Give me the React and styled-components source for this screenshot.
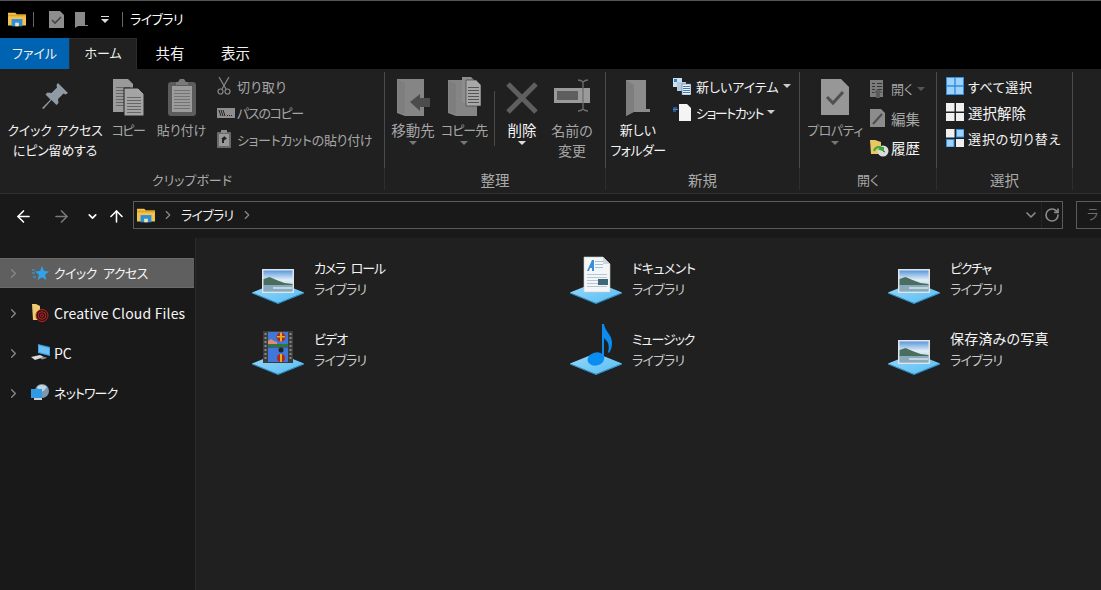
import React from 'react';
import styled, { createGlobalStyle } from 'styled-components';
import { ChevronRight, ChevronDown, ArrowLeft, ArrowRight, ArrowUp, RotateCw } from 'lucide-react';

const GlobalStyle = createGlobalStyle`
  html, body {
    margin: 0;
    height: 100%;
    overflow: hidden;
    background: #202020;
  }
  body {
    font-family: "Noto Sans CJK JP", "Noto Sans", sans-serif;
    font-size: 13px;
    font-feature-settings: "palt";
    color: #fff;
  }
  svg { display: block; flex: none; }
`;

const Window = styled.div`
  height: 590px;
  display: flex;
  flex-direction: column;
  overflow: hidden;
`;

const TitleBar = styled.div`
  height: 38px;
  box-sizing: border-box;
  background: #000;
  border-top: 1px solid #555;
  display: flex;
  align-items: center;
  padding: 0 0 1px 8px;
`;

const TitleSep = styled.div`
  width: 1px;
  height: 15px;
  background: #666;
  margin: 0 ${p => p.$r}px 0 ${p => p.$l}px;
`;

const TitleIcon = styled.div`
  margin-right: ${p => p.$r}px;
`;

const TitleText = styled.span`
  font-size: 13px;
  line-height: 18px;
  letter-spacing: -0.6px;
`;

const Tabs = styled.div`
  height: 31px;
  background: #000;
  display: flex;
`;

const Tab = styled.div`
  width: ${p => p.$w}px;
  text-align: center;
  line-height: 29px;
  font-size: ${p => p.$fs || 13}px;
  color: #f0f0f0;
  background: ${p => (p.$file ? '#0063b1' : p.$active ? '#202020' : 'transparent')};
  box-shadow: ${p => (p.$active ? 'inset 1px 1px 0 #2c2c2c, inset -1px 0 0 #2c2c2c' : 'none')};
`;

const Ribbon = styled.div`
  height: 125px;
  box-sizing: border-box;
  padding-top: 3px;
  background: #202020;
  border-bottom: 1px solid #303030;
  display: flex;
`;

const Group = styled.div`
  width: ${p => p.$w}px;
  flex: none;
  display: flex;
  flex-direction: column;
`;

const GroupBody = styled.div`
  height: 96px;
  display: flex;
  box-sizing: border-box;
  padding-left: ${p => p.$pl || 0}px;
  border-right: 1px solid #4a4a4a;
`;

const GroupLabel = styled.div`
  height: 22px;
  padding-top: 1px;
  box-sizing: border-box;
  line-height: 22px;
  text-align: center;
  font-size: ${p => p.$fs || 13}px;
  color: #aaa;
  border-right: 1px solid #2e2e2e;
`;

const LargeButton = styled.div`
  width: ${p => p.$w}px;
  flex: none;
  display: flex;
  flex-direction: column;
  align-items: center;
  padding-top: 3px;
  color: ${p => (p.$muted ? '#a6a6a6' : '#f4f4f4')};
  line-height: 20px;
  text-align: center;
  white-space: nowrap;
`;

const LargeIcon = styled.div`
  height: 46px;
  box-sizing: border-box;
  padding-top: ${p => p.$pt}px;
  display: flex;
  align-items: flex-start;
  justify-content: center;
`;

const Label = styled.span`
  margin: ${p => (p.$flat ? '0' : '-1px 0 1px')};
  font-size: ${p => p.$fs || 13}px;
  letter-spacing: ${p => p.$ls || 0}px;
  word-spacing: ${p => p.$ws || 0}px;
`;

const DropMark = styled.span`
  width: 0;
  height: 0;
  margin-top: ${p => p.$mt || 0}px;
  margin-left: ${p => p.$ml || 0}px;
  border-left: 4px solid transparent;
  border-right: 4px solid transparent;
  border-top: 4px solid ${p => p.$c || '#777'};
`;

const ButtonSep = styled.div`
  width: 1px;
  height: 55px;
  margin: 19px 0 0 7px;
  background: #4a4a4a;
`;

const SmallColumn = styled.div`
  display: flex;
  flex-direction: column;
  padding-top: ${p => p.$pt}px;
  padding-left: ${p => p.$pl || 0}px;
`;

const SmallButton = styled.div`
  height: ${p => p.$h}px;
  display: flex;
  align-items: center;
  gap: ${p => p.$gap}px;
  white-space: nowrap;
  color: ${p => (p.$muted ? '#a6a6a6' : '#f4f4f4')};
`;

const AddressRow = styled.div`
  height: 44px;
  background: #191919;
  display: flex;
  align-items: center;
`;

const NavButton = styled.div`
  flex: none;
  width: ${p => p.$w}px;
  margin-left: ${p => p.$ml || 0}px;
  display: flex;
  justify-content: center;
  color: ${p => (p.$off ? '#7a7a7a' : '#fff')};
`;

const AddressBox = styled.div`
  width: 930px;
  height: 28px;
  box-sizing: border-box;
  border: 1px solid #5b5b5b;
  margin-bottom: 2px;
  display: flex;
  align-items: center;
  padding-left: 3px;
  flex: none;
`;

const CrumbChevron = styled(ChevronRight)`
  color: #8a8a8a;
  margin-left: ${p => p.$ml || 0}px;
`;

const Crumb = styled.span`
  margin: -2px 7px 0 6px;
  letter-spacing: -0.7px;
  color: #f0f0f0;
`;

const AddressEnd = styled.div`
  margin-left: auto;
  display: flex;
  align-items: center;
  height: 100%;
  color: #8a8a8a;
`;

const RefreshBox = styled.div`
  height: 100%;
  width: 20px;
  display: flex;
  align-items: center;
  justify-content: center;
  border-left: 1px solid #242424;
  margin-left: 2px;
`;

const SearchBox = styled.div`
  flex: none;
  width: 60px;
  height: 28px;
  box-sizing: border-box;
  margin: 0 0 2px 13px;
  border: 1px solid #5b5b5b;
  padding-left: 10px;
  line-height: 24px;
  color: #6e6e6e;
  overflow: hidden;
`;

const Body = styled.div`
  flex: 1;
  display: flex;
  min-height: 0;
`;

const Sidebar = styled.div`
  width: 196px;
  flex: none;
  box-sizing: border-box;
  background: #191919;
  border-right: 1px solid #2b2b2b;
  padding-top: 20px;
  display: flex;
  flex-direction: column;
  gap: 10px;
`;

const TreeRow = styled.div`
  height: 30px;
  width: 194px;
  box-sizing: border-box;
  display: flex;
  align-items: center;
  padding-left: 6px;
  color: #f6f6f6;
  white-space: nowrap;
  background: ${p => (p.$selected ? '#5f5f5f' : 'transparent')};
  border-top: 1px solid ${p => (p.$selected ? '#6a6a6a' : 'transparent')};
  border-bottom: 1px solid ${p => (p.$selected ? '#6a6a6a' : 'transparent')};
`;

const TreeChevron = styled(ChevronRight)`
  color: #8a8a8a;
`;

const TreeIcon = styled.div`
  width: 19px;
  margin: 0 4px 0 10px;
  display: flex;
  justify-content: center;
`;

const Content = styled.div`
  flex: 1;
  background: #202020;
  padding: 14px 0 0 55px;
  display: grid;
  grid-template-columns: repeat(3, 318px);
  grid-auto-rows: 71px;
  align-content: start;
`;

const Tile = styled.div`
  display: flex;
  align-items: center;
  gap: 9px;
  height: 54px;
`;

const TileText = styled.div`
  margin-top: -2px;
  line-height: 21px;
  white-space: nowrap;
  color: #f4f4f4;
`;

const TileName = styled.div`
  font-size: ${p => p.$fs || 13}px;
  letter-spacing: ${p => p.$ls || 0}px;
  word-spacing: ${p => p.$ws || 0}px;
`;

const TileSub = styled.div`
  color: #c8c8c8;
  letter-spacing: -0.7px;
`;

/* --- drawings --- */

const FolderGlyph = ({ s = 18 }) => (
  <svg width={s} height={s * 0.85} viewBox="0 0 20 17">
    <path d="M0 2h8l2 2h10v12H0z" fill="#f4c34d" />
    <rect x="0" y="4" width="20" height="2" fill="#e0a526" />
    <rect x="4" y="9" width="12" height="8" fill="#2b8fdc" />
    <rect x="8" y="13" width="4" height="4" fill="#f4e3a8" />
  </svg>
);

const CheckDoc = () => (
  <svg width="15" height="17" viewBox="0 0 15 17">
    <path d="M0 0h11l4 4v13H0z" fill="#8e8e8e" />
    <path d="M3 9l3 3 6-6" fill="none" stroke="#444" strokeWidth="1.6" />
  </svg>
);

const GrayFolderSmall = () => (
  <svg width="13" height="17" viewBox="0 0 13 17">
    <path d="M0 1h10v13h3v1H3l-3 2z" fill="#8a8a8a" />
  </svg>
);

const OverflowMark = () => (
  <svg width="8" height="7" viewBox="0 0 8 7">
    <rect y="0" width="8" height="1" fill="#ddd" />
    <path d="M0 3h8L4 7z" fill="#ddd" />
  </svg>
);

const Pin = () => (
  <svg width="28" height="28" viewBox="0 0 28 28">
    <path d="M17 0l10 10-2.500 1.500-2-1-5.500 5.500.5 4-2 2-5-5L2.500 26 1 25l8.500-8.500-5-5 2-2 4 .5L16 4.500l-.5-2.500z" fill="#8f9aa4" />
  </svg>
);

const Lines = ({ x, y, w, n, gap = 3, c = '#666' }) => (
  <>
    {Array.from({ length: n }, (_, i) => (
      <rect key={i} x={x} y={y + i * gap} width={w} height="1" fill={c} />
    ))}
  </>
);

const CopyBig = () => (
  <svg width="31" height="37" viewBox="0 0 31 37">
    <path d="M0 0h15l5 5v28H0z" fill="#9a9a9a" />
    <Lines x={3} y={8} w={14} n={7} />
    <path d="M11 9h14l6 6v22H11z" fill="#a4a4a4" stroke="#202020" />
    <Lines x={14} y={18} w={14} n={6} />
  </svg>
);

const PasteBig = () => (
  <svg width="28" height="37" viewBox="0 0 28 37">
    <rect x="0" y="3" width="28" height="34" rx="3" fill="#5c5c5c" />
    <path d="M10 3l2-3h4l2 3h2v3H8V3z" fill="#7a7a7a" />
    <rect x="4" y="7" width="20" height="26" fill="#9c9c9c" />
    <Lines x={6} y={11} w={16} n={7} c="#737373" />
  </svg>
);

const Scissors = () => (
  <svg width="14" height="18" viewBox="0 0 14 18" fill="none" stroke="#8a8a8a" strokeWidth="1.200">
    <path d="M2 0l7 12M12 0L5 12" />
    <circle cx="3.500" cy="14.500" r="2.500" />
    <circle cx="10.500" cy="14.500" r="2.500" />
  </svg>
);

const PathCopy = () => (
  <svg width="18" height="10" viewBox="0 0 18 10">
    <rect width="18" height="10" fill="#8e8e8e" />
    <path d="M2 2l2 6M4 2l2 6M6 2l2 6" stroke="#222" fill="none" />
    <rect x="10" y="7" width="1" height="1" fill="#222" />
    <rect x="12" y="7" width="1" height="1" fill="#222" />
    <rect x="14" y="7" width="1" height="1" fill="#222" />
  </svg>
);

const ShortcutPaste = () => (
  <svg width="14" height="18" viewBox="0 0 14 18">
    <rect y="2" width="14" height="16" rx="1" fill="#6a6a6a" />
    <rect x="4" y="0" width="6" height="3" fill="#8a8a8a" />
    <rect x="2" y="4" width="10" height="12" fill="#999" />
    <path d="M5 13V9h-1l3-2.500V6l3 2.500-3 2V9H7v4z" fill="#222" />
  </svg>
);

const MoveTo = () => (
  <svg width="33" height="37" viewBox="0 0 33 37">
    <path d="M0 0h27v37H8l-8-3z" fill="#858585" />
    <path d="M1 1l7 3v31l-7-2z" fill="#7e7e7e" />
    <path d="M13 23L23 15v4h10v9H23v4z" fill="#4c4c4c" />
  </svg>
);

const CopyTo = () => (
  <svg width="33" height="39" viewBox="0 0 33 39">
    <path d="M0 3h29v36H8l-8-3z" fill="#858585" />
    <path d="M1 4l7 3v30l-7-2z" fill="#7e7e7e" />
    <path d="M14 0h9l4 4v22H14z" fill="#8d8d8d" />
    <path d="M18 3h10l5 5v21H18z" fill="#a8a8a8" stroke="#333" strokeWidth=".6" />
    <Lines x={20} y={10} w={11} n={6} c="#555" />
  </svg>
);

const DeleteX = () => (
  <svg width="32" height="32" viewBox="0 0 32 32">
    <path d="M2 2l28 28M30 2L2 30" stroke="#5f5f5f" strokeWidth="5" fill="none" />
  </svg>
);

const Rename = () => (
  <svg width="37" height="33" viewBox="0 0 37 33">
    <rect x="0" y="9" width="36" height="15" fill="#9a9a9a" />
    <rect x="3" y="12" width="21" height="9" fill="#5e5e5e" />
    <path d="M24 1c3 0 4 1 5 2 1-1 2-2 5-2M29 3v27M24 32c3 0 4-1 5-2 1 1 2 2 5 2" fill="none" stroke="#6e6e6e" strokeWidth="1.300" />
  </svg>
);

const NewFolderBig = () => (
  <svg width="24" height="36" viewBox="0 0 24 36">
    <path d="M0 0h20v29h4v3H7l-7 4z" fill="#8c8c8c" />
    <path d="M0 0l8 5v27l-8 4z" fill="#7e7e7e" />
  </svg>
);

const NewItem = () => (
  <svg width="18" height="17" viewBox="0 0 18 17">
    <rect x="0" y="0" width="9" height="9" fill="#cfe0ee" />
    <rect x="1" y="1" width="3" height="3" fill="#2e86d0" />
    <rect x="4" y="4" width="9" height="9" fill="#b6cde0" />
    <rect x="9" y="6" width="9" height="11" fill="#f1f4f8" stroke="#5a7ea0" strokeWidth=".7" />
    <Lines x={10} y={8} w={7} n={4} gap={2} c="#3f78ac" />
  </svg>
);

const ShortcutItem = () => (
  <svg width="18" height="17" viewBox="0 0 18 17">
    <path d="M6 0h8l4 4v13H6z" fill="#f4f4f4" />
    <path d="M0 4h4M0 7h3M0 5.500h5" stroke="#2f8fe6" strokeWidth="1" fill="none" />
  </svg>
);

const PropsBig = () => (
  <svg width="28" height="36" viewBox="0 0 28 36">
    <path d="M0 0h20l8 8v28H0z" fill="#979797" />
    <path d="M6 18l6 6 10-11" fill="none" stroke="#505050" strokeWidth="3" />
  </svg>
);

const OpenItem = () => (
  <svg width="16" height="18" viewBox="0 0 16 18">
    <rect width="13" height="17" fill="#7c7c7c" />
    <Lines x={2} y={3} w={3} n={4} c="#333" />
    <Lines x={7} y={3} w={5} n={3} c="#333" />
    <path d="M6 18v-5H3l5-4 5 4h-3v5z" fill="#5b5b5b" />
  </svg>
);

const EditItem = () => (
  <svg width="16" height="18" viewBox="0 0 16 18">
    <path d="M0 0h11l4 4v14H0z" fill="#8c8c8c" />
    <path d="M3 15l9-10" stroke="#4e4e4e" strokeWidth="2" fill="none" />
  </svg>
);

const HistoryItem = () => (
  <svg width="19" height="18" viewBox="0 0 19 18">
    <path d="M0 1h5l6 2v12H1z" fill="#e9c764" />
    <circle cx="13" cy="12" r="5.500" fill="#dcdcdc" />
    <path d="M13 9v3l2 1" stroke="#444" fill="none" />
    <path d="M4 12a5 5 0 0 1 8-3l-2 1 3 1 0-3" stroke="#38a83a" strokeWidth="2" fill="none" />
  </svg>
);

const SelectGrid = ({ fills }) => (
  <svg width="18" height="18" viewBox="0 0 18 18">
    {[[0, 0], [10, 0], [0, 10], [10, 10]].map(([x, y], i) => (
      <rect key={i} x={x + 0.5} y={y + 0.5} width="7.500" height="7.500" fill={fills[i] ? '#9fd2f8' : '#f0f0f0'} stroke={fills[i] ? '#2f8fe0' : '#f0f0f0'} />
    ))}
  </svg>
);

const SelectAllIcon = () => (
  <svg width="18" height="18" viewBox="0 0 18 18">
    <rect x=".5" y=".5" width="17" height="17" fill="#9fd2f8" stroke="#2f8fe0" />
    <path d="M9 0v18M0 9h18" stroke="#2f8fe0" strokeWidth="1.400" />
  </svg>
);

const StarIcon = () => (
  <svg width="17" height="17" viewBox="0 0 17 17">
    <path d="M10 1l2 5 5 .4-4 3.400 1.300 5.200-4.300-2.800L5.700 15 7 9.800 3 6.400 8 6z" fill="#2ea4ee" />
    <path d="M0 5h3M0 8h3M1 12h3" stroke="#2ea4ee" fill="none" />
  </svg>
);

const CloudFolder = () => (
  <svg width="17" height="18" viewBox="0 0 17 18">
    <path d="M0 0h4l4 2v14H1z" fill="#eecb70" />
    <circle cx="10" cy="11.500" r="6" fill="#1a1a1a" stroke="#d81b1b" />
    <circle cx="10" cy="11.500" r="3.800" fill="none" stroke="#d81b1b" />
    <circle cx="10" cy="11.500" r="1.500" fill="none" stroke="#d81b1b" />
  </svg>
);

const PcIcon = () => (
  <svg width="19" height="18" viewBox="0 0 19 18">
    <path d="M7 0l12 3v9L7 9z" fill="#3aa0e8" />
    <path d="M8 1.500l10 2.500v6.500L8 8z" fill="#6cc0f5" />
    <path d="M0 13l9-2 4 2-9 3z" fill="#dcdcdc" />
    <path d="M9 14l5-1 2 1-5 1.500z" fill="#9a9a9a" />
  </svg>
);

const NetIcon = () => (
  <svg width="19" height="18" viewBox="0 0 19 18">
    <circle cx="11" cy="7" r="7" fill="#7a98ae" />
    <path d="M6 3c3-3 8-2 10 0-2 2-3 5-7 5z" fill="#c0d2de" />
    <rect x="0" y="5" width="11" height="9" fill="#2f9ae6" />
    <rect x="3" y="14" width="8" height="2" fill="#cfcfcf" />
  </svg>
);

const Library = ({ children }) => (
  <svg width="54" height="54" viewBox="0 0 54 54">
    <defs>
      <linearGradient id="baseFill" x1="0" y1="0" x2="1" y2="1">
        <stop offset="0" stopColor="#9ad9fa" />
        <stop offset="1" stopColor="#55bdf3" />
      </linearGradient>
      <linearGradient id="sky" x1="0" y1="0" x2="0" y2="1">
        <stop offset="0" stopColor="#5a98dc" />
        <stop offset=".45" stopColor="#e2eef6" />
        <stop offset="1" stopColor="#a9c0cc" />
      </linearGradient>
    </defs>
    <path d="M1 40.500L27 51l26-10.500v1L27 52 1 41.500z" fill="#2a9fe6" />
    <path d="M1 40.500L27 30l26 10.500L27 51z" fill="url(#baseFill)" />
    {children}
  </svg>
);

const Landscape = () => (
  <Library>
    <rect x="11" y="17" width="32" height="24" fill="#dfe6ea" />
    <rect x="12.500" y="18.500" width="29" height="21" fill="url(#sky)" />
    <path d="M12.500 27l6-2 7 3 8 3 8 1v1.500h-29z" fill="#4a6e5e" />
    <rect x="12.500" y="33" width="29" height="6.500" fill="#8aabbd" />
    <rect x="22" y="35" width="19" height="2" fill="#c3d6e0" />
  </Library>
);

const DocTile = () => (
  <Library>
    <path d="M15 5h19l7 7v28H15z" fill="#f4f6f8" stroke="#c4ccd2" strokeWidth=".6" />
    <path d="M34 5l7 7h-7z" fill="#cfd6dc" />
    <path d="M18 19l5-11h2v11h-2v-3h-2l-1 3z" fill="#3a8fd8" />
    <Lines x={26} y={9} w={8} n={3} c="#9fc4e0" />
    <Lines x={18} y={22} w={20} n={5} c="#b6c8d6" />
    <rect x="29" y="27" width="10" height="6" fill="#3d6a7a" />
  </Library>
);

const VideoTile = () => (
  <Library>
    <rect x="12" y="8" width="30" height="32" fill="#3c3c3c" />
    <rect x="17" y="9" width="20" height="14.500" fill="#3f78d8" />
    <rect x="17" y="24.500" width="20" height="14.500" fill="#3f78d8" />
    <path d="M17 18l3-2 3 2 3 1v4h-9z" fill="#e08a7a" />
    <rect x="17" y="21" width="20" height="2.500" fill="#2e7a32" />
    <circle cx="30" cy="14" r="4.500" fill="#b8241c" />
    <rect x="29" y="9.500" width="2" height="9" fill="#e0b020" />
    <rect x="26" y="13" width="8" height="1.500" fill="#e0b020" />
    <circle cx="30" cy="35" r="4" fill="#b8241c" />
    <rect x="29" y="31" width="2" height="8" fill="#e0b020" />
    <circle cx="30" cy="27" r="2.500" fill="#222" />
    {[10, 14, 18, 22, 26, 30, 34].map(y => (
      <React.Fragment key={y}>
        <rect x="13.500" y={y} width="2" height="2" fill="#888" />
        <rect x="38.500" y={y} width="2" height="2" fill="#888" />
      </React.Fragment>
    ))}
  </Library>
);

const MusicTile = () => (
  <Library>
    <ellipse cx="27" cy="36" rx="8.500" ry="6.500" fill="#0a8cf0" transform="rotate(-15 27 36)" />
    <path d="M33 35V1h2c1 8 8 10 8 19 0 4-1 7-3 10l-1-1c1-3 1-6 0-9-1-2-3-4-4-5v20z" fill="#0a8cf0" />
  </Library>
);

const tiles = [
  { name: 'カメラ ロール', ls: -1.2, ws: 4, icon: <Landscape /> },
  { name: 'ドキュメント', ls: -0.5, icon: <DocTile /> },
  { name: 'ピクチャ', ls: -1.4, icon: <Landscape /> },
  { name: 'ビデオ', ls: -1, icon: <VideoTile /> },
  { name: 'ミュージック', ls: -1.1, icon: <MusicTile /> },
  { name: '保存済みの写真', fs: 14, ls: 0.2, icon: <Landscape /> },
];

const tree = [
  { label: 'クイック アクセス', ls: -0.6, ws: 4, icon: <StarIcon /> , selected: true },
  { label: 'Creative Cloud Files', fs: 14, ls: 0.15, flat: true, icon: <CloudFolder /> },
  { label: 'PC', fs: 14, flat: true, icon: <PcIcon /> },
  { label: 'ネットワーク', ls: -0.9, icon: <NetIcon /> },
];

const App = () => (
  <Window>
    <GlobalStyle />
    <TitleBar>
      <FolderGlyph />
      <TitleSep $l={7} $r={15} />
      <TitleIcon $r={11}><CheckDoc /></TitleIcon>
      <TitleIcon $r={13}><GrayFolderSmall /></TitleIcon>
      <OverflowMark />
      <TitleSep $l={13} $r={7} />
      <TitleText>ライブラリ</TitleText>
    </TitleBar>
    <Tabs>
      <Tab $w={69} $file>ファイル</Tab>
      <Tab $w={68} $active>ホーム</Tab>
      <Tab $w={66} $fs={14.500}>共有</Tab>
      <Tab $w={65} $fs={14.500}>表示</Tab>
    </Tabs>
    <Ribbon>
      <Group $w={385}>
        <GroupBody>
          <LargeButton $w={110}>
            <LargeIcon $pt={8}><Pin /></LargeIcon>
            <Label $ls={-0.2} $ws={2}>クイック アクセス<br />にピン留めする</Label>
          </LargeButton>
          <LargeButton $w={36} $muted>
            <LargeIcon $pt={4}><CopyBig /></LargeIcon>
            <Label $ls={-1.5}>コピー</Label>
          </LargeButton>
          <LargeButton $w={71} $muted>
            <LargeIcon $pt={4}><PasteBig /></LargeIcon>
            <Label>貼り付け</Label>
          </LargeButton>
          <SmallColumn $pt={1}>
            <SmallButton $h={26.500} $gap={6} $muted><Scissors /><Label $flat $ls={0.5}>切り取り</Label></SmallButton>
            <SmallButton $h={26.500} $gap={2} $muted><PathCopy /><Label $flat $ls={-1.3}>パスのコピー</Label></SmallButton>
            <SmallButton $h={26.500} $gap={6} $muted><ShortcutPaste /><Label $flat $ls={-0.3}>ショートカットの貼り付け</Label></SmallButton>
          </SmallColumn>
        </GroupBody>
        <GroupLabel>クリップボード</GroupLabel>
      </Group>
      <Group $w={221}>
        <GroupBody>
          <LargeButton $w={56} $muted>
            <LargeIcon $pt={4}><MoveTo /></LargeIcon>
            <Label $fs={14.500}>移動先</Label>
            <DropMark />
          </LargeButton>
          <LargeButton $w={46} $muted>
            <LargeIcon $pt={2}><CopyTo /></LargeIcon>
            <Label $ls={-1}>コピー先</Label>
            <DropMark />
          </LargeButton>
          <ButtonSep />
          <LargeButton $w={54}>
            <LargeIcon $pt={7}><DeleteX /></LargeIcon>
            <Label $fs={14.500}>削除</Label>
            <DropMark $c="#ddd" />
          </LargeButton>
          <LargeButton $w={46} $muted>
            <LargeIcon $pt={4}><Rename /></LargeIcon>
            <Label $fs={14}>名前の<br />変更</Label>
          </LargeButton>
        </GroupBody>
        <GroupLabel $fs={14.500}>整理</GroupLabel>
      </Group>
      <Group $w={194}>
        <GroupBody>
          <LargeButton $w={64}>
            <LargeIcon $pt={5}><NewFolderBig /></LargeIcon>
            <Label>新しい<br /><Label $flat $ls={-0.6}>フォルダー</Label></Label>
          </LargeButton>
          <SmallColumn $pt={1} $pl={3}>
            <SmallButton $h={26} $gap={5}><NewItem /><Label $flat>新しいアイテム</Label><DropMark $ml={-1} $c="#ccc" /></SmallButton>
            <SmallButton $h={26} $gap={5}><ShortcutItem /><Label $flat $ls={-1.4}>ショートカット</Label><DropMark $ml={-1} $c="#ccc" /></SmallButton>
          </SmallColumn>
        </GroupBody>
        <GroupLabel $fs={14.500}>新規</GroupLabel>
      </Group>
      <Group $w={137}>
        <GroupBody>
          <LargeButton $w={70} $muted>
            <LargeIcon $pt={4}><PropsBig /></LargeIcon>
            <Label $ls={-0.5}>プロパティ</Label>
            <DropMark />
          </LargeButton>
          <SmallColumn $pt={2}>
            <SmallButton $h={29.500} $gap={5} $muted><OpenItem /><Label $flat>開く</Label><DropMark $ml={-1} $c="#555" /></SmallButton>
            <SmallButton $h={29.500} $gap={5} $muted><EditItem /><Label $flat $fs={14.500}>編集</Label></SmallButton>
            <SmallButton $h={29.500} $gap={2}><HistoryItem /><Label $flat $fs={14.500}>履歴</Label></SmallButton>
          </SmallColumn>
        </GroupBody>
        <GroupLabel>開く</GroupLabel>
      </Group>
      <Group $w={136}>
        <GroupBody $pl={9}>
          <SmallColumn $pt={1}>
            <SmallButton $h={26} $gap={4}><SelectAllIcon /><Label $flat $ls={0.6}>すべて選択</Label></SmallButton>
            <SmallButton $h={26} $gap={4}><SelectGrid fills={[0, 0, 0, 0]} /><Label $flat $fs={14.500}>選択解除</Label></SmallButton>
            <SmallButton $h={26} $gap={4}><SelectGrid fills={[0, 1, 1, 0]} /><Label $flat $ls={0.9}>選択の切り替え</Label></SmallButton>
          </SmallColumn>
        </GroupBody>
        <GroupLabel $fs={14.500}>選択</GroupLabel>
      </Group>
    </Ribbon>
    <AddressRow>
      <NavButton $w={46}><ArrowLeft size={19} strokeWidth={2} /></NavButton>
      <NavButton $w={30} $off><ArrowRight size={19} strokeWidth={2} /></NavButton>
      <NavButton $w={16} $ml={8}><ChevronDown size={13} strokeWidth={3} /></NavButton>
      <NavButton $w={33}><ArrowUp size={19} strokeWidth={2} /></NavButton>
      <AddressBox>
        <FolderGlyph />
        <CrumbChevron size={14} $ml={6} />
        <Crumb>ライブラリ</Crumb>
        <CrumbChevron size={14} />
        <AddressEnd>
          <ChevronDown size={16} strokeWidth={2.500} />
          <RefreshBox><RotateCw size={16} strokeWidth={2.500} /></RefreshBox>
        </AddressEnd>
      </AddressBox>
      <SearchBox>ラ</SearchBox>
    </AddressRow>
    <Body>
      <Sidebar>
        {tree.map(t => (
          <TreeRow key={t.label} $selected={t.selected}>
            <TreeChevron size={15} />
            <TreeIcon>{t.icon}</TreeIcon>
            <Label $flat={t.flat} $fs={t.fs} $ls={t.ls} $ws={t.ws}>{t.label}</Label>
          </TreeRow>
        ))}
      </Sidebar>
      <Content>
        {tiles.map(t => (
          <Tile key={t.name}>
            {t.icon}
            <TileText>
              <TileName $fs={t.fs} $ls={t.ls} $ws={t.ws}>{t.name}</TileName>
              <TileSub>ライブラリ</TileSub>
            </TileText>
          </Tile>
        ))}
      </Content>
    </Body>
  </Window>
);

export default App;
